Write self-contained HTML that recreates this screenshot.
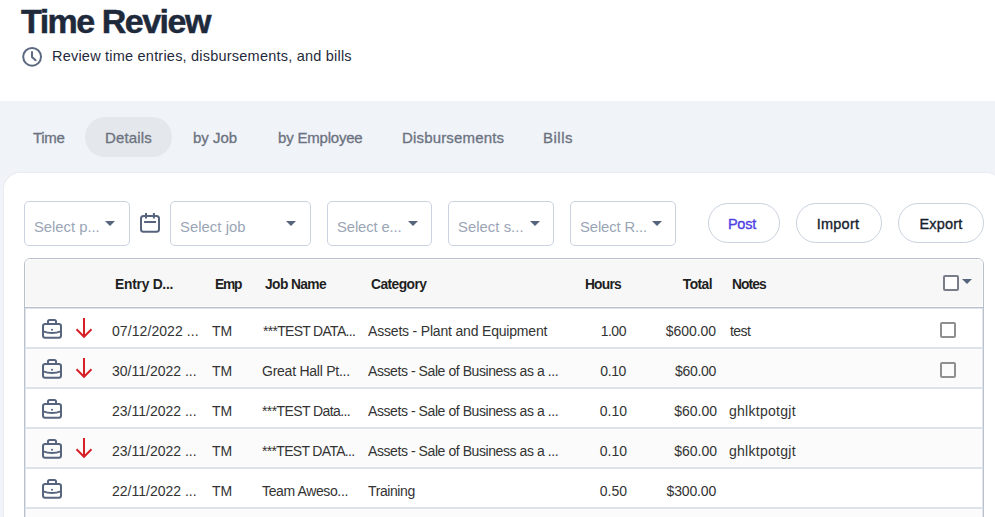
<!DOCTYPE html>
<html><head><meta charset="utf-8">
<style>
*{box-sizing:border-box;margin:0;padding:0}
html,body{width:995px;height:517px;overflow:hidden;background:#fff;font-family:"Liberation Sans",sans-serif}
.abs{position:absolute;white-space:nowrap}
#title{position:absolute;white-space:nowrap;left:21px;top:0px;font-size:34px;font-weight:bold;color:#1e293b;line-height:42px;-webkit-text-stroke:0.5px #1e293b}
#sub{position:absolute;white-space:nowrap;left:52px;top:47px;font-size:14.5px;color:#1f2a3c;line-height:18px}
#band{position:absolute;left:0;top:101px;width:995px;height:416px;background:#f0f3f8}
.tab{position:absolute;top:118px;height:39px;line-height:39px;font-size:15px;color:#6b7280;font-weight:normal;-webkit-text-stroke:0.3px currentColor;white-space:nowrap}
#pill{position:absolute;left:85px;top:117px;width:87px;height:40px;border-radius:20px;background:#e4e7eb}
#card{position:absolute;left:4px;top:173px;width:998px;height:400px;background:#fff;border-radius:16px;box-shadow:0 0 0 1px #e8ecf1}
.sel{position:absolute;top:201px;height:45px;border:1px solid #c9d2df;border-radius:5px;background:#fff}
.st{position:absolute;left:10px;top:16px;font-size:14.8px;color:#9aa5b5;white-space:nowrap;line-height:18px}
.sel i{position:absolute;top:19px;width:0;height:0;border-left:5px solid transparent;border-right:5px solid transparent;border-top:5px solid #56657d}
.btn{position:absolute;top:203px;height:40px;border:1px solid #c9d2df;border-radius:20px;background:#fff}
.bt{position:absolute;left:0;right:0;top:11px;font-size:14.5px;font-weight:normal;-webkit-text-stroke:0.35px currentColor;color:#161e2e;text-align:center;line-height:18px;white-space:nowrap}
#tbl{position:absolute;left:24px;top:258px;width:960px;height:300px;border:1px solid #b9c0cb;border-radius:6px;overflow:hidden;background:#fff}
#tbl:before{content:"";position:absolute;left:0;top:50px;bottom:0;width:1px;background:#e2e7ef;z-index:5}
#tbl:after{content:"";position:absolute;right:0;top:50px;bottom:0;width:1px;background:#e2e7ef;z-index:5}
#thead{position:absolute;left:0;top:0;width:100%;height:49px;background:#f7f7f7;border-bottom:1px solid #b8bfca;box-shadow:inset 1px 0 #fdfdfd,inset -1px 0 #fdfdfd,inset 0 -1px #fdfdfd,inset 0 1px #fbfbfb}
#thead:after{content:"";position:absolute;left:0;right:0;bottom:-2px;height:1px;background:#dfe5ee}
.row{position:absolute;left:0;width:100%;height:40px;border-bottom:2px solid #dee3eb}
.th{position:absolute;top:17.5px;font-size:13.8px;font-weight:bold;color:#1f1f1f;white-space:nowrap;line-height:16px}
.td{position:absolute;top:14px;font-size:14px;color:#333;white-space:nowrap;line-height:16px}
.r{text-align:right}
.cb{position:absolute;width:16px;height:16px;border:2px solid #8f8f8f;border-radius:2px}
.bc{position:absolute;left:17px;top:10px}
.ar{position:absolute;left:50px;top:9px}
</style></head><body>
<div id="title"  style=";letter-spacing:-1.500px">Time Review</div>
<svg style="position:absolute;left:22px;top:46px" width="21" height="21" viewBox="0 0 21 21"><circle cx="10.1" cy="10.8" r="8.9" fill="none" stroke="#5b6a80" stroke-width="2"/><path d="M10 6v5l3.6 3.2" fill="none" stroke="#5b6a80" stroke-width="2" stroke-linecap="round"/></svg>
<div id="sub"  style=";letter-spacing:0.215px">Review time entries, disbursements, and bills</div>

<div id="band"></div>
<div id="pill"></div>
<div id="tab0" class="tab" style="left:33px;letter-spacing:-0.333px">Time</div>
<div id="tab1" class="tab" style="left:106px;letter-spacing:0.155px;transform:translateX(-1px)">Details</div>
<div id="tab2" class="tab" style="left:193px">by Job</div>
<div id="tab3" class="tab" style="left:278px;letter-spacing:-0.200px">by Employee</div>
<div id="tab4" class="tab" style="left:403px;letter-spacing:0.167px;transform:translateX(-1px)">Disbursements</div>
<div id="tab5" class="tab" style="left:544px;letter-spacing:0.500px;transform:translateX(-1px)">Bills</div>

<div id="card"></div>
<div class="sel" style="left:24px;width:106px"><div id="s0" class="st" style=";letter-spacing:-0.010px;transform:translateX(-1px)">Select p...</div><i style="left:80px"></i></div>
<svg style="position:absolute;left:140px;top:213px" width="20" height="20" viewBox="0 0 20 20"><rect x="1" y="3" width="18" height="15.7" rx="2.5" fill="none" stroke="#56657d" stroke-width="2"/><path d="M6 0v5.6M13.9 0v5.6M4.1 9h11.9" stroke="#56657d" stroke-width="2"/></svg>
<div class="sel" style="left:170px;width:141px"><div id="s1" class="st" style=";letter-spacing:0.056px;transform:translateX(-1px)">Select job</div><i style="left:115px"></i></div>
<div class="sel" style="left:327px;width:105px"><div id="s2" class="st" style=";letter-spacing:-0.110px;transform:translateX(-1px)">Select e...</div><i style="left:80px"></i></div>
<div class="sel" style="left:448px;width:106px"><div id="s3" class="st" style=";letter-spacing:0.060px;transform:translateX(-1px)">Select s...</div><i style="left:81px"></i></div>
<div class="sel" style="left:570px;width:106px"><div id="s4" class="st" style=";letter-spacing:-0.110px;transform:translateX(-1px)">Select R...</div><i style="left:81px"></i></div>
<div class="btn" style="left:708px;width:72px"><div id="b0" class="bt" style="color:#5040e4;letter-spacing:-0.197px;transform:translateX(-2px)">Post</div></div>
<div class="btn" style="left:796px;width:86px"><div id="b1" class="bt" style=";letter-spacing:0.240px;transform:translateX(-1px)">Import</div></div>
<div class="btn" style="left:898px;width:86px"><div id="b2" class="bt" style=";letter-spacing:0.200px">Export</div></div>

<div id="tbl">
 <div id="thead">
  <div id="h0" class="th" style="left:90px;letter-spacing:-0.242px">Entry D...</div>
  <div id="h1" class="th" style="left:190px;letter-spacing:-1.200px">Emp</div>
  <div id="h2" class="th" style="left:240px;letter-spacing:-0.606px">Job Name</div>
  <div id="h3" class="th" style="left:346px;letter-spacing:-0.544px">Category</div>
  <div id="h4" class="th r" style="right:362px;letter-spacing:-0.750px">Hours</div>
  <div id="h5" class="th r" style="right:272px;letter-spacing:-0.550px;transform:translateX(1px)">Total</div>
  <div id="h6" class="th" style="left:707px;letter-spacing:-0.900px">Notes</div>
  <div class="cb" style="left:918px;top:16px;border-color:#797d8a;background:#fff"></div>
  <i style="position:absolute;left:937px;top:20px;width:0;height:0;border-left:5px solid transparent;border-right:5px solid transparent;border-top:5px solid #56657d"></i>
 </div>
<div class="row" style="top:50px;background:#fff"><svg class="bc" width="20" height="20" viewBox="0 0 20 20"><path d="M6 5V2.6C6 1.7 6.7 1 7.6 1h4.8c.9 0 1.6.7 1.6 1.6V5" fill="none" stroke="#56657d" stroke-width="2"/><rect x="1" y="5" width="18" height="13.7" rx="2.2" fill="none" stroke="#56657d" stroke-width="2"/><path d="M1.2 12.4Q10 15.6 18.8 12.4" fill="none" stroke="#56657d" stroke-width="2"/><circle cx="10" cy="10.8" r="1.05" fill="#56657d"/></svg><svg class="ar" width="18" height="21" viewBox="0 0 18 21"><path d="M9 0v18.8M1.5 11.3L9 18.8l7.5-7.5" fill="none" stroke="#d71f26" stroke-width="2"/></svg><div id="r0d" class="td" style="left:87px;letter-spacing:0.077px">07/12/2022 ...</div><div id="r0e" class="td" style="left:187px">TM</div><div id="r0j" class="td" style="left:237px;letter-spacing:-0.705px;transform:translateX(1px)">***TEST DATA...</div><div id="r0c" class="td" style="left:343px;letter-spacing:-0.185px">Assets - Plant and Equipment</div><div id="r0h" class="td r" style="right:356px;letter-spacing:-0.469px;transform:translateX(-1px)">1.00</div><div id="r0t" class="td r" style="right:266px;letter-spacing:-0.037px;transform:translateX(-1px)">$600.00</div><div id="r0n" class="td" style="left:704px;letter-spacing:-0.568px;transform:translateX(1px)">test</div><div class="cb" style="left:915px;top:13px"></div></div>
<div class="row" style="top:90px;background:#fbfbfb"><svg class="bc" width="20" height="20" viewBox="0 0 20 20"><path d="M6 5V2.6C6 1.7 6.7 1 7.6 1h4.8c.9 0 1.6.7 1.6 1.6V5" fill="none" stroke="#56657d" stroke-width="2"/><rect x="1" y="5" width="18" height="13.7" rx="2.2" fill="none" stroke="#56657d" stroke-width="2"/><path d="M1.2 12.4Q10 15.6 18.8 12.4" fill="none" stroke="#56657d" stroke-width="2"/><circle cx="10" cy="10.8" r="1.05" fill="#56657d"/></svg><svg class="ar" width="18" height="21" viewBox="0 0 18 21"><path d="M9 0v18.8M1.5 11.3L9 18.8l7.5-7.5" fill="none" stroke="#d71f26" stroke-width="2"/></svg><div id="r1d" class="td" style="left:87px">30/11/2022 ...</div><div id="r1e" class="td" style="left:187px">TM</div><div id="r1j" class="td" style="left:237px;letter-spacing:-0.249px">Great Hall Pt...</div><div id="r1c" class="td" style="left:343px;letter-spacing:-0.427px">Assets - Sale of Business as a ...</div><div id="r1h" class="td r" style="right:356px;letter-spacing:-0.370px;transform:translateX(-1px)">0.10</div><div id="r1t" class="td r" style="right:266px;letter-spacing:-0.320px;transform:translateX(-1px)">$60.00</div><div class="cb" style="left:915px;top:13px"></div></div>
<div class="row" style="top:130px;background:#fff"><svg class="bc" width="20" height="20" viewBox="0 0 20 20"><path d="M6 5V2.6C6 1.7 6.7 1 7.6 1h4.8c.9 0 1.6.7 1.6 1.6V5" fill="none" stroke="#56657d" stroke-width="2"/><rect x="1" y="5" width="18" height="13.7" rx="2.2" fill="none" stroke="#56657d" stroke-width="2"/><path d="M1.2 12.4Q10 15.6 18.8 12.4" fill="none" stroke="#56657d" stroke-width="2"/><circle cx="10" cy="10.8" r="1.05" fill="#56657d"/></svg><div id="r2d" class="td" style="left:87px">23/11/2022 ...</div><div id="r2e" class="td" style="left:187px">TM</div><div id="r2j" class="td" style="left:237px;letter-spacing:-0.598px">***TEST Data...</div><div id="r2c" class="td" style="left:343px;letter-spacing:-0.427px">Assets - Sale of Business as a ...</div><div id="r2h" class="td r" style="right:356px">0.10</div><div id="r2t" class="td r" style="right:266px">$60.00</div><div id="r2n" class="td" style="left:704px;letter-spacing:0.270px">ghlktpotgjt</div></div>
<div class="row" style="top:170px;background:#fbfbfb"><svg class="bc" width="20" height="20" viewBox="0 0 20 20"><path d="M6 5V2.6C6 1.7 6.7 1 7.6 1h4.8c.9 0 1.6.7 1.6 1.6V5" fill="none" stroke="#56657d" stroke-width="2"/><rect x="1" y="5" width="18" height="13.7" rx="2.2" fill="none" stroke="#56657d" stroke-width="2"/><path d="M1.2 12.4Q10 15.6 18.8 12.4" fill="none" stroke="#56657d" stroke-width="2"/><circle cx="10" cy="10.8" r="1.05" fill="#56657d"/></svg><svg class="ar" width="18" height="21" viewBox="0 0 18 21"><path d="M9 0v18.8M1.5 11.3L9 18.8l7.5-7.5" fill="none" stroke="#d71f26" stroke-width="2"/></svg><div id="r3d" class="td" style="left:87px">23/11/2022 ...</div><div id="r3e" class="td" style="left:187px">TM</div><div id="r3j" class="td" style="left:237px;letter-spacing:-0.679px">***TEST DATA...</div><div id="r3c" class="td" style="left:343px;letter-spacing:-0.427px">Assets - Sale of Business as a ...</div><div id="r3h" class="td r" style="right:356px">0.10</div><div id="r3t" class="td r" style="right:266px">$60.00</div><div id="r3n" class="td" style="left:704px;letter-spacing:0.270px">ghlktpotgjt</div></div>
<div class="row" style="top:210px;background:#fff"><svg class="bc" width="20" height="20" viewBox="0 0 20 20"><path d="M6 5V2.6C6 1.7 6.7 1 7.6 1h4.8c.9 0 1.6.7 1.6 1.6V5" fill="none" stroke="#56657d" stroke-width="2"/><rect x="1" y="5" width="18" height="13.7" rx="2.2" fill="none" stroke="#56657d" stroke-width="2"/><path d="M1.2 12.4Q10 15.6 18.8 12.4" fill="none" stroke="#56657d" stroke-width="2"/><circle cx="10" cy="10.8" r="1.05" fill="#56657d"/></svg><div id="r4d" class="td" style="left:87px">22/11/2022 ...</div><div id="r4e" class="td" style="left:187px">TM</div><div id="r4j" class="td" style="left:237px;letter-spacing:-0.375px">Team Aweso...</div><div id="r4c" class="td" style="left:343px;letter-spacing:-0.407px">Training</div><div id="r4h" class="td r" style="right:356px">0.50</div><div id="r4t" class="td r" style="right:266px;letter-spacing:-0.167px;transform:translateX(-1px)">$300.00</div></div>
<div class="row" style="top:250px;background:#fbfbfb"></div>
</div>
</body></html>
